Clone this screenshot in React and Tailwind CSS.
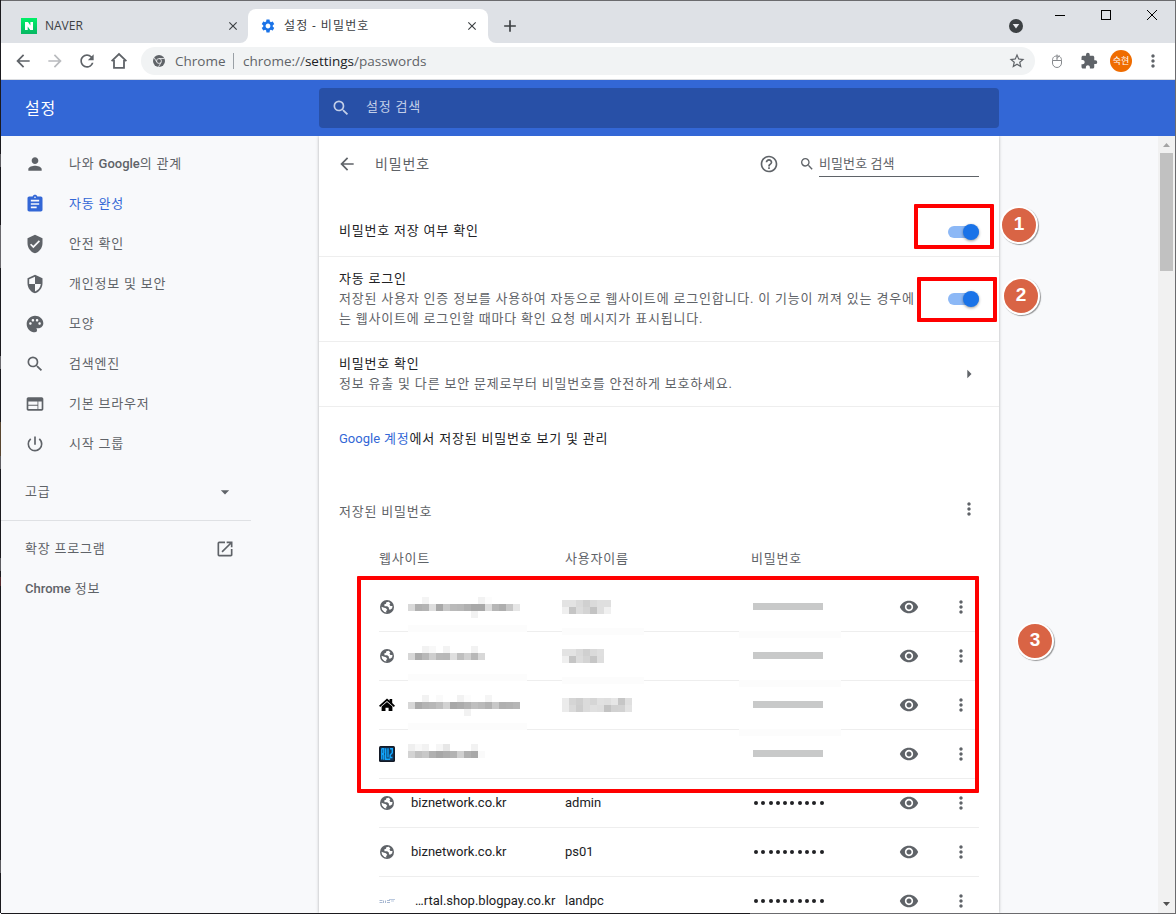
import React from 'react';
import {
  MdAdd,
  MdArrowBack,
  MdArrowDropDown,
  MdArrowForward,
  MdArrowRight,
  MdAssignment,
  MdClose,
  MdExtension,
  MdHelpOutline,
  MdMoreVert,
  MdOpenInNew,
  MdPalette,
  MdPerson,
  MdPowerSettingsNew,
  MdRefresh,
  MdSearch,
  MdSecurity,
  MdSettings,
  MdStarBorder,
  MdVerifiedUser,
  MdVisibility,
  MdWeb,
} from 'react-icons/md';

const menuItems = [
  { icon: MdPerson, label: <>나와 <b className="font-medium tracking-normal">Google</b>의 관계</> },
  { icon: MdAssignment, label: '자동 완성', active: true },
  { icon: MdVerifiedUser, label: '안전 확인' },
  { icon: MdSecurity, label: '개인정보 및 보안' },
  { icon: MdPalette, label: '모양' },
  { icon: MdSearch, label: '검색엔진' },
  { icon: MdWeb, label: '기본 브라우저' },
  { icon: MdPowerSettingsNew, label: '시작 그룹' },
];

// Mosaic rows, one entry per line of 7px blocks. Two hex digits are one grey level, '..' is empty
const hiddenEntries = [
  {
    icon: 'globe',
    site: [
      '....f4..............f2fc........',
      'd9b0b4dea8c8bab8b0a8a8dcb6aec8e6',
      '..................f2............',
    ],
    user: ['e3e3dad0dadfdf', 'efc5dcd4c3dff0'],
  },
  {
    icon: 'globe',
    site: ['....f2f8..f3......f2..', 'd7abb8ceb9b8dfbfd1b8d8'],
    user: ['e3e3dad0dadf', 'efc5dcd4c6de'],
  },
  {
    icon: 'home',
    site: [
      '....f2..fa....f2fc....f5........',
      'd7abb4b7bfd2a8acb3bfbab2c8b0b2b6',
      '................f2..............',
    ],
    user: ['ebd5cfdbd6e1dfe6c6df', 'ebdacddbe0dec3d1d2e3'],
  },
  {
    icon: 'biz',
    site: ['eff8f2..f6e7......f2..', 'd3c1c8b0a7adb3d0b0a8fa'],
    user: [],
  },
];

const visibleEntries = [
  { icon: 'globe', site: 'biznetwork.co.kr', user: 'admin' },
  { icon: 'globe', site: 'biznetwork.co.kr', user: 'ps01' },
  { icon: 'logo', site: '…rtal.shop.blogpay.co.kr', user: 'landpc' },
];

// What shows through along the left edge of the window
const edgeSegments = [
  [154, '#1b1a1e'], [13, '#5d5c60'], [58, '#1b1a1e'], [43, '#69686c'], [88, '#1b1a1e'],
  [13, '#69686c'], [53, '#1b1a1e'], [34, '#58452f'], [13, '#5d5c60'], [89, '#1b1a1e'],
  [13, '#5d5c60'], [6, '#1b1a1e'], [9, '#56282b'], [274, '#1b1a1e'], [13, '#5d5c60'], [40, '#1b1a1e'],
];

const Mosaic = ({ lines }) => (
  <svg width="112" height={lines.length * 7} shapeRendering="crispEdges" className="block">
    {lines.map((line, y) =>
      (line.match(/../g) || []).map((c, x) =>
        c === '..' ? null : (
          <rect key={`${x}-${y}`} x={x * 7} y={y * 7} width="7" height="7" fill={`#${c}${c}${c}`} />
        )
      )
    )}
  </svg>
);

const ChromeIcon = () => (
  <svg width="12" height="12" viewBox="0 0 24 24">
    <circle cx="12" cy="12" r="12" fill="#5f6368" />
    <circle cx="12" cy="12" r="4.9" fill="none" stroke="#f1f3f4" strokeWidth="1.6" />
    <path d="M12 7h11M7.7 14.4L2.2 5.2M16.2 14.6L11 23.8" stroke="#f1f3f4" strokeWidth="1.6" />
  </svg>
);

const Globe = () => (
  <svg width="14" height="14" viewBox="0 0 14 14">
    <circle cx="7" cy="7" r="7" fill="#5f6368" />
    <path d="M8.8 1.7L6.3 2.3 6 3.8 4.2 4.6 4.6 6.2H7.2L8.8 7.6 9 9.4 10.6 9.6 12.2 8.2 12.5 6 10.4 5.9 9.4 4.6 10.4 3.4zM1.5 6.8L2 9.4 4.3 12 6.5 12.6 6 11 7.4 10 6 8.2 3.4 7.6z" fill="#fff" />
  </svg>
);

const SiteIcon = ({ type }) => {
  if (type === 'home') {
    return (
      <svg width="16" height="16" viewBox="0 0 16 16">
        <path d="M8 1.4L10.6 3.8V2.1h2.6v4L16 8.8l-1.200 1.200L8 4.100 1.200 10 0 8.800z" fill="#000" />
        <path d="M8 4.900l5.400 4.700V14H9.600v-3.200H6.500V14H2.600V9.600z" fill="#000" />
      </svg>
    );
  }
  if (type === 'biz') {
    return (
      <svg width="16" height="16" viewBox="0 0 16 16">
        <rect width="16" height="16" rx="1.5" fill="#141a26" />
        <rect x="1.5" y="1.5" width="13" height="13" fill="#12395e" />
        <path d="M2.8 2.500v11M2.800 2.700h2v4.300l-1 1 1 1v4.700M6.700 2.300v11h4.500M9 2.300v9.200M11 2.700h2.300v4L11.200 9v2.500h2.200" stroke="#12a8ff" strokeWidth="1.4" fill="none" />
      </svg>
    );
  }
  if (type === 'logo') {
    return (
      <svg width="16" height="6" viewBox="0 0 16 6">
        <path d="M.5 2.500h3M.5 4.500h3M4.500 2.500v2.500M6.500 2.500v2.500M8 2.500h3M8 4.500h3" stroke="#a9b9d2" strokeWidth="1" fill="none" />
        <path d="M10 1.500h6M12 3h3" stroke="#bccadf" strokeWidth="1" fill="none" />
      </svg>
    );
  }
  return <Globe />;
};

const Toggle = () => (
  <div className="flex h-4 w-[31px] items-center justify-end">
    <div className="flex h-3 w-[31px] items-center justify-end rounded-full bg-[#8cb8f6]">
      <div className="size-4 shrink-0 rounded-full bg-[#1a73e8] shadow-[0_1px_3px_rgba(0,0,0,0.4)]" />
    </div>
  </div>
);

const Badge = ({ children, className }) => (
  <div className={`absolute flex size-[38px] items-center justify-center rounded-full border-[2.5px] border-white bg-[#d96445] pb-[3px] font-['Liberation_Sans'] text-[19px] font-bold tracking-normal text-white shadow-[1px_1px_1px_rgba(0,0,0,0.4)] ${className}`}>
    {children}
  </div>
);

const RowActions = () => (
  <>
    <MdVisibility className="ml-auto size-5 text-[#5f6368]" />
    <MdMoreVert className="ml-8 mr-2 size-5 text-[#5f6368]" />
  </>
);

const TabStrip = () => (
  <div className="flex h-[42px] shrink-0 bg-[#dee1e6] pt-2 text-xs text-[#3c4043]">
    <div className="flex h-[34px] w-[239px] items-center pl-5">
      <svg width="16" height="16" viewBox="0 0 16 16">
        <defs>
          <linearGradient id="naver" x1="0" y1="0" x2="0" y2="1">
            <stop offset="0" stopColor="#00f067" />
            <stop offset="1" stopColor="#06b663" />
          </linearGradient>
        </defs>
        <rect width="16" height="16" fill="url(#naver)" />
        <path d="M4 4h3l2.4 3.6V4H12v8H9.2L6.7 8.4V12H4z" fill="#fff" />
      </svg>
      <span className="ml-2 font-['Open_Sans'] text-[12px]">NAVER</span>
      <MdClose className="ml-auto size-[14px]" />
    </div>
    <svg width="8" height="34" className="shrink-0">
      <path d="M0 34a8 8 0 0 0 8-8v8z" fill="#fff" />
    </svg>
    <div className="flex h-[34px] w-60 items-center rounded-t-lg bg-white pl-3">
      <MdSettings className="size-4 text-[#1a73e8]" />
      <span className="ml-2 tracking-[1.1px]">설정 - 비밀번호</span>
      <MdClose className="ml-auto mr-[9px] size-[14px]" />
    </div>
    <svg width="8" height="34" className="shrink-0">
      <path d="M8 34a8 8 0 0 1-8-8v8z" fill="#fff" />
    </svg>
    <MdAdd className="ml-1 mt-[7px] size-5" />
    <svg width="14" height="14" viewBox="0 0 14 14" className="ml-auto mt-[10px]">
      <circle cx="7" cy="7" r="7" fill="#3c4043" />
      <path d="M3.7 5h6.600L7 9.600z" fill="#e8eaed" />
    </svg>
    <svg width="102" height="11" className="ml-8 mr-[18px] mt-px" fill="none" stroke="#000" shapeRendering="crispEdges">
      <path d="M0 5.5h10" />
      <rect x="46.5" y=".5" width="9" height="9" />
      <path d="M92 0l10 10M102 0L92 10" shapeRendering="auto" />
    </svg>
  </div>
);

const Toolbar = () => (
  <div className="flex h-[37px] shrink-0 items-center border-b border-[#dadce0] bg-white pl-3 text-[#5f6368]">
    <MdArrowBack className="size-5" />
    <MdArrowForward className="ml-3 size-5 text-[#b9bbbe]" />
    <MdRefresh className="ml-3 size-5" />
    <svg width="18" height="18" viewBox="0 0 18 18" className="ml-[13px]" fill="none" stroke="currentColor" strokeWidth="1.8">
      <path d="M1.6 9.2L9 2l7.4 7.2M4 8v7.8h10V8" />
    </svg>
    <div className="ml-[13px] flex h-7 w-[894px] items-center rounded-full bg-[#f1f3f4] pl-3 font-['Open_Sans'] text-[13.5px]">
      <ChromeIcon />
      <span className="ml-[10px] w-[50px] whitespace-nowrap">Chrome</span>
      <span className="ml-2 h-4 w-px bg-[#9aa0a6]" />
      <span className="ml-[9px]">
        chrome://<span className="text-[#202124]">settings</span>/passwords
      </span>
      <MdStarBorder className="ml-auto mr-[9px] size-[18px]" />
    </div>
    <svg width="12" height="16" viewBox="0 0 12 16" className="ml-4" fill="none" stroke="#85888c">
      <path d="M1.5 7.5h9V10a4.5 4.5 0 0 1-9 0zM1.500 7.500C1.500 4 3.500 3 6 3s4.500 1 4.500 4.500M6 7.500V1.500M6 5.500l2.500-3" />
    </svg>
    <MdExtension className="ml-[17px] size-[18px]" />
    <div className="ml-3 flex size-[22px] items-center justify-center whitespace-nowrap rounded-full bg-[#ef6c00] text-[9px] text-white">숙현</div>
    <MdMoreVert className="ml-[11px] size-5" />
  </div>
);

const Sidebar = () => (
  <div className="w-[250px] shrink-0 pt-2 font-normal text-[#5f6368]">
    {menuItems.map(({ icon: Icon, label, active }, i) => (
      <div key={i} className={`flex h-10 items-center pl-6 ${active ? 'text-[#3367d6]' : ''}`}>
        <Icon className="size-5" />
        <span className="ml-6 pb-px">{label}</span>
      </div>
    ))}
    <div className="flex h-14 items-center pl-6">
      <span className="pb-px">고급</span>
      <MdArrowDropDown className="ml-auto mr-4 size-5" />
    </div>
    <div className="mb-2 h-px bg-[#dfe1e4]" />
    <div className="flex h-10 items-center pl-6">
      <span className="pb-px">확장 프로그램</span>
      <MdOpenInNew className="ml-auto mr-4 size-5" />
    </div>
    <div className="flex h-10 items-center pl-6">
      <span><b className="font-medium tracking-normal">Chrome</b> 정보</span>
    </div>
  </div>
);

const PasswordList = () => (
  <div className="pl-[60px] pr-5 text-[#202124]">
    {hiddenEntries.map((entry, i) => (
      <div key={i} className="relative flex h-[49px] items-center border-b border-[#eeeeee]">
        <div className="flex w-4 justify-center"><SiteIcon type={entry.icon} /></div>
        <div className="ml-[13px] h-[21px] w-[154px]">
          <Mosaic lines={entry.site} />
        </div>
        <div className="w-[191px]">
          <Mosaic lines={entry.user} />
        </div>
        <div className="mb-px h-[7px] w-[70px] bg-[#c8c9c9]" />
        <RowActions />
        {i < 3 && <div className="absolute left-[29px] top-[42px] h-[7px] w-[119px] bg-[#fcfcfc]" />}
        {i < 2 && <div className="absolute left-[183px] top-[45px] h-[7px] w-[82px] bg-[#fcfcfc]" />}
        {i < 3 && <div className="absolute left-[360px] top-[48px] h-[7px] w-[102px] bg-[#fcfcfc]" />}
      </div>
    ))}
    {visibleEntries.map((entry, i) => (
      <div key={i} className="flex h-[49px] items-center border-b border-[#eeeeee]">
        <div className="flex w-4 justify-center"><SiteIcon type={entry.icon} /></div>
        <span className={`w-[154px] whitespace-nowrap pb-px tracking-normal ${entry.icon === 'logo' ? 'ml-5 mr-[-4px]' : 'ml-4'}`}>{entry.site}</span>
        <span className="w-[189px] pb-px tracking-normal">{entry.user}</span>
        <div className="flex gap-[3.3px]">
          {Array.from({ length: 10 }, (_, d) => (
            <span key={d} className="size-1 rounded-full bg-[#202124]" />
          ))}
        </div>
        <RowActions />
      </div>
    ))}
  </div>
);

const PasswordCard = () => (
  <div className="w-[680px] shrink-0 bg-white text-[#5f6368] shadow-[0_0_3px_rgba(60,64,67,0.4)]">
    <div className="flex h-14 items-center pl-[18px] pr-5">
      <MdArrowBack className="size-5" />
      <span className="ml-[18px] pb-px text-sm tracking-[0.9px]">비밀번호</span>
      <MdHelpOutline className="ml-auto size-5" />
      <MdSearch className="ml-5 size-4" />
      <div className="ml-1 h-[26px] w-40 border-b border-[#5f6368] pt-[3px] leading-5 tracking-[0.1px]">비밀번호 검색</div>
    </div>
    <div className="mt-4 flex h-[49px] items-center justify-between border-b border-[#eeeeee] px-5">
      <span className="pb-0.5 text-[#202124]">비밀번호 저장 여부 확인</span>
      <Toggle />
    </div>
    <div className="flex h-[85px] items-center justify-between border-b border-[#eeeeee] pl-5 pr-5">
      <div className="pb-px">
        <div className="text-[#202124]">자동 로그인</div>
        <div className="whitespace-nowrap">
          저장된 사용자 인증 정보를 사용하여 자동으로 웹사이트에 로그인합니다. 이 기능이 꺼져 있는 경우에<br />
          는 웹사이트에 로그인할 때마다 확인 요청 메시지가 표시됩니다.
        </div>
      </div>
      <Toggle />
    </div>
    <div className="flex h-[65px] items-center justify-between border-b border-[#eeeeee] px-5">
      <div className="pb-px">
        <div className="text-[#202124]">비밀번호 확인</div>
        <div>정보 유출 및 다른 보안 문제로부터 비밀번호를 안전하게 보호하세요.</div>
      </div>
      <MdArrowRight className="size-5" />
    </div>
    <div className="flex h-[62px] items-center px-5 pt-0.5 text-[#202124]">
      <span>
        <span className="text-[#3367d6]"><span className="tracking-normal">Google</span> 계정</span>에서 저장된 비밀번호 보기 및 관리
      </span>
    </div>
    <div className="mt-5 flex h-10 items-center justify-between px-5">
      <span className="pt-1.5">저장된 비밀번호</span>
      <MdMoreVert className="size-5" />
    </div>
    <div className="mb-[5px] mt-[11px] flex h-[38px] items-center pb-px pl-[60px]">
      <span className="w-[186px]">웹사이트</span>
      <span className="w-[186px]">사용자이름</span>
      <span>비밀번호</span>
    </div>
    <PasswordList />
  </div>
);

const App = () => {
  return (
    <div className="relative flex h-[914px] w-[1176px] overflow-hidden bg-[#f8f9fb] font-['Roboto','Noto_Sans_CJK_KR',sans-serif] text-[13px] leading-5 tracking-[0.8px]">
      <div className="flex w-px shrink-0 flex-col">
        {edgeSegments.map(([height, color], i) => (
          <div key={i} className="shrink-0" style={{ height, background: color }} />
        ))}
      </div>

      <div className="flex h-full w-[1175px] flex-col border-r border-t border-[#6b6b6e]">
        <div className="flex shrink-0 flex-col tracking-normal">
          <TabStrip />
          <Toolbar />
        </div>

        {/* Settings header */}
        <div className="flex h-14 shrink-0 items-center bg-[#3367d6] text-white">
          <span className="w-[318px] pl-6 pt-0.5 text-base">설정</span>
          <div className="flex h-10 w-[680px] items-center rounded-sm bg-[#2850a7] pl-3 text-[#c3cfe8]">
            <MdSearch className="size-5" />
            <span className="ml-[15px] pb-0.5">설정 검색</span>
          </div>
        </div>

        <div className="flex h-[777px] shrink-0 overflow-hidden">
          <Sidebar />
          <div className="w-[68px] shrink-0" />
          <PasswordCard />
          <div className="ml-auto flex w-[17px] flex-col items-center bg-[#f1f1f1]">
            <svg width="17" height="17" className="shrink-0"><path d="M5 11l3.500-4 3.500 4z" fill="#a3a3a3" /></svg>
            <div className="h-[118px] w-[13px] shrink-0 bg-[#c1c1c1]" />
            <svg width="17" height="17" className="mt-auto shrink-0"><path d="M5 6l3.500 4L12 6z" fill="#505050" /></svg>
          </div>
        </div>
        <div className="flex h-px shrink-0 bg-[#6b6b6e]">
          <div className="w-[749px] bg-[#1b1a1e]" />
        </div>
      </div>

      {/* Numbered callouts */}
      <div className="absolute left-[914px] top-[204px] h-[45px] w-20 rounded-[1px] border-4 border-[#ff0000]" />
      <div className="absolute left-[917px] top-[277px] h-[45px] w-20 rounded-[1px] border-4 border-[#ff0000]" />
      <div className="absolute left-[357px] top-[576px] h-[217px] w-[622px] rounded-[1px] border-4 border-[#ff0000]" />
      <Badge className="left-[1000px] top-[206px]">1</Badge>
      <Badge className="left-[1002px] top-[277px]">2</Badge>
      <Badge className="left-[1016px] top-[622px]">3</Badge>
    </div>
  );
};

export default App;
